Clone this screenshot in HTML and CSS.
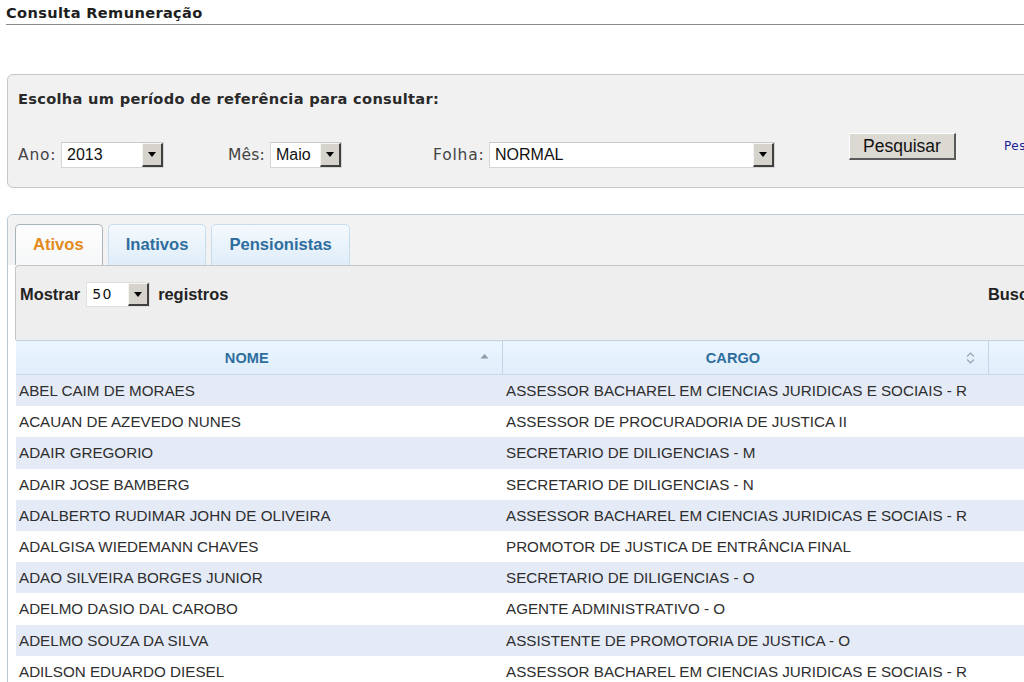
FILE: index.html
```html
<!DOCTYPE html>
<html lang="pt">
<head>
<meta charset="utf-8">
<title>Consulta Remuneração</title>
<link rel="stylesheet" href="styles.css">
</head>
<body>
<div class="page">
  <h1 class="title">Consulta Remuneração</h1>

  <div class="filter">
    <div class="filter-heading">Escolha um período de referência para consultar:</div>
    <div class="filter-row">
      <div class="field field-ano">
        <span class="label label-ano">Ano:</span>
        <span class="combo combo-ano"><span class="combo-value">2013</span><span class="combo-btn"><i class="tri"></i></span></span>
      </div>
      <div class="field field-mes">
        <span class="label label-mes">Mês:</span>
        <span class="combo combo-mes"><span class="combo-value">Maio</span><span class="combo-btn"><i class="tri"></i></span></span>
      </div>
      <div class="field field-folha">
        <span class="label label-folha">Folha:</span>
        <span class="combo combo-folha"><span class="combo-value">NORMAL</span><span class="combo-btn"><i class="tri"></i></span></span>
      </div>
      <button class="btn">Pesquisar</button>
      <a class="link">Pesquisa avançada</a>
    </div>
  </div>

  <div class="tabs">
    <div class="tab-nav">
      <span class="tab tab-active">Ativos</span>
      <span class="tab">Inativos</span>
      <span class="tab">Pensionistas</span>
    </div>
    <div class="panel">
      <div class="dt-top">
        <div class="dt-length">
          <span>Mostrar</span>
          <span class="combo combo-len"><span class="combo-value len-value">50</span><span class="combo-btn"><i class="tri"></i></span></span>
          <span>registros</span>
        </div>
        <div class="dt-filter">Buscar:</div>
      </div>
      <table class="grid">
        <colgroup><col class="c1"><col class="c2"><col class="c3"></colgroup>
        <thead>
          <tr>
            <th><span class="th-text">NOME</span>
              <svg class="sort sort-asc" width="9" height="6" viewBox="0 0 9 6"><path d="M0.5 5.5 L4.5 1 L8.5 5.5 Z" fill="#8a9aa6"/></svg>
            </th>
            <th><span class="th-text">CARGO</span>
              <svg class="sort sort-both" width="9" height="12" viewBox="0 0 9 12"><path d="M1 4.5 L4.5 1.2 L8 4.5" fill="none" stroke="#9aaab6" stroke-width="1.3"/><path d="M1 7.5 L4.5 10.8 L8 7.5" fill="none" stroke="#9aaab6" stroke-width="1.3"/></svg>
            </th>
            <th></th>
          </tr>
        </thead>
        <tbody>
          <tr class="odd"><td>ABEL CAIM DE MORAES</td><td>ASSESSOR BACHAREL EM CIENCIAS JURIDICAS E SOCIAIS - R</td><td></td></tr>
          <tr><td>ACAUAN DE AZEVEDO NUNES</td><td>ASSESSOR DE PROCURADORIA DE JUSTICA II</td><td></td></tr>
          <tr class="odd"><td>ADAIR GREGORIO</td><td>SECRETARIO DE DILIGENCIAS - M</td><td></td></tr>
          <tr><td>ADAIR JOSE BAMBERG</td><td>SECRETARIO DE DILIGENCIAS - N</td><td></td></tr>
          <tr class="odd"><td>ADALBERTO RUDIMAR JOHN DE OLIVEIRA</td><td>ASSESSOR BACHAREL EM CIENCIAS JURIDICAS E SOCIAIS - R</td><td></td></tr>
          <tr><td>ADALGISA WIEDEMANN CHAVES</td><td>PROMOTOR DE JUSTICA DE ENTRÂNCIA FINAL</td><td></td></tr>
          <tr class="odd"><td>ADAO SILVEIRA BORGES JUNIOR</td><td>SECRETARIO DE DILIGENCIAS - O</td><td></td></tr>
          <tr><td>ADELMO DASIO DAL CAROBO</td><td>AGENTE ADMINISTRATIVO - O</td><td></td></tr>
          <tr class="odd"><td>ADELMO SOUZA DA SILVA</td><td>ASSISTENTE DE PROMOTORIA DE JUSTICA - O</td><td></td></tr>
          <tr><td>ADILSON EDUARDO DIESEL</td><td>ASSESSOR BACHAREL EM CIENCIAS JURIDICAS E SOCIAIS - R</td><td></td></tr>
        </tbody>
      </table>
    </div>
  </div>
</div>
</body>
</html>
```

FILE: styles.css
```css
html, body {
  margin: 0;
  padding: 0;
  background: #ffffff;
  overflow: hidden;
}
body {
  width: 1024px;
  height: 682px;
  font-family: "DejaVu Sans", Verdana, sans-serif;
  color: #333;
}
.page {
  width: 1250px;
  padding: 3px 0 0 7px;
}
.title {
  margin: 0 0 0 -1px;
  font-size: 14.6px;
  font-weight: bold;
  line-height: 20px;
  color: #1e1e1e;
  border-bottom: 1px solid #8a8a8a;
  padding-bottom: 1px;
  letter-spacing: 0.35px;
}

/* filter box */
.filter {
  margin-top: 49px;
  height: 114px;
  box-sizing: border-box;
  background: #f1f1f1;
  border: 1px solid #c6c6c6;
  border-radius: 6px;
  padding: 14px 10px 0 10px;
}
.filter-heading {
  font-size: 14.6px;
  font-weight: bold;
  line-height: 20px;
  color: #2a2a2a;
  letter-spacing: 0.3px;
}
.filter-row {
  display: flex;
  align-items: flex-start;
  margin-top: 24px;
}
.field {
  display: flex;
  align-items: center;
  margin-top: 9px;
  height: 26px;
}
.label {
  font-size: 15.5px;
  color: #444;
  letter-spacing: 0.8px;
}
.label-ano { width: 43px; }
.label-mes { width: 42px; letter-spacing: 0.2px; }
.label-folha { width: 56px; }
.field-mes { margin-left: 64px; }
.field-folha { margin-left: 91px; }

.combo {
  display: flex;
  height: 26px;
  box-sizing: border-box;
  background: #fff;
  border: 1px solid #d6d6d6;
  border-top-color: #c9c9c9;
}
.combo-ano { width: 103px; }
.combo-mes { width: 72px; }
.combo-folha { width: 286px; }
.combo-value {
  flex: 1;
  font-family: "Liberation Sans", Arial, sans-serif;
  font-size: 16px;
  line-height: 24px;
  color: #111;
  padding-left: 5px;
}
.combo-btn {
  width: 21px;
  height: 24px;
  box-sizing: border-box;
  background: #d6d3cc;
  border-top: 1px solid #f4f4f2;
  border-left: 1px solid #f4f4f2;
  border-right: 2px solid #404040;
  border-bottom: 2px solid #404040;
  display: flex;
  align-items: center;
  justify-content: center;
}
.tri {
  width: 0;
  height: 0;
  border-left: 4px solid transparent;
  border-right: 4px solid transparent;
  border-top: 5px solid #000;
}

.btn {
  margin-left: 74px;
  width: 107px;
  height: 27px;
  box-sizing: border-box;
  background: #dcd9d2;
  border-top: 1px solid #ffffff;
  border-left: 1px solid #ffffff;
  border-right: 2px solid #5a5a5a;
  border-bottom: 2px solid #5a5a5a;
  font-family: "Liberation Sans", Arial, sans-serif;
  font-size: 17.5px;
  color: #111;
  padding: 0;
  line-height: 22px;
}
.link {
  margin-left: 48px;
  margin-top: 3px;
  font-size: 12px;
  line-height: 20px;
  color: #1c1c9c;
  white-space: nowrap;
  letter-spacing: 0.5px;
}

/* tabs */
.tabs {
  margin-top: 26px;
  border: 1px solid #b7c9d4;
  border-radius: 6px;
  background: #fff;
  height: 520px;
  overflow: hidden;
}
.tab-nav {
  display: flex;
  gap: 5px;
  padding: 9px 0 0 7px;
  background: #f2f2f2;
  height: 41px;
}
.tab {
  height: 41px;
  box-sizing: border-box;
  padding: 0 17px 0 17px;
  font-family: "Liberation Sans", Arial, sans-serif;
  font-weight: bold;
  font-size: 16.6px;
  line-height: 40px;
  color: #2e6e9e;
  background: linear-gradient(#f4f9fd, #dfedf9);
  border: 1px solid #c7dcec;
  border-bottom: none;
  border-radius: 5px 5px 0 0;
}
.tab-active {
  color: #e38a1c;
  background: linear-gradient(#fdfdfd, #f6f7f8);
  border-color: #a9b4bb;
  padding-right: 18px;
}
.panel {
  margin-left: 7px;
}
.dt-top {
  display: flex;
  height: 75px;
  box-sizing: border-box;
  background: #eeeeee;
  border-top: 1px solid #c2c6c9;
  border-left: 1px solid #c2c6c9;
  border-radius: 4px 0 0 0;
  padding: 16px 0 0 4px;
  font-family: "Liberation Sans", Arial, sans-serif;
  font-weight: bold;
  font-size: 16.4px;
  color: #222;
}
.dt-length {
  flex: 0 0 968px;
  display: flex;
  align-items: center;
  height: 25px;
  gap: 6px;
}
.dt-filter {
  line-height: 25px;
}
.combo-len {
  width: 64px;
  height: 25px;
  margin: 0 2px 0 0;
  border-color: #dedede;
}
.combo-len .combo-btn {
  height: 23px;
}
.len-value {
  font-family: "DejaVu Sans", Verdana, sans-serif;
  font-weight: normal;
  font-size: 14px;
  letter-spacing: 1.5px;
  line-height: 23px;
  padding-left: 5px;
}

/* table */
.grid {
  border-collapse: collapse;
  table-layout: fixed;
  width: 1172px;
  margin-left: 1px;
  font-family: "Liberation Sans", Arial, sans-serif;
}
.c1 { width: 486px; }
.c2 { width: 486px; }
.c3 { width: 200px; }
.grid thead th {
  height: 34px;
  box-sizing: border-box;
  padding: 0 24px 0 0;
  position: relative;
  background: linear-gradient(#eaf5fe, #dfeefb);
  border-top: 1px solid #c3d3df;
  border-bottom: 1px solid #c8daea;
  border-right: 1px solid #c3d5e3;
  font-size: 14.6px;
  font-weight: bold;
  color: #2e6e9e;
  text-align: center;
}
.sort {
  position: absolute;
  right: 12px;
  top: 50%;
  transform: translateY(-50%);
}
.sort-asc { right: 13px; margin-top: -2px; }
.sort-both { right: 13px; }
.grid tbody td {
  height: 31.2px;
  padding: 0 0 0 3px;
  font-size: 15.2px;
  color: #2e2e2e;
  white-space: nowrap;
  overflow: hidden;
  background: #ffffff;
}
.grid tbody td:nth-child(2) {
  padding-left: 4px;
}
.grid tbody tr.odd td {
  background: #e4eaf6;
}
```
